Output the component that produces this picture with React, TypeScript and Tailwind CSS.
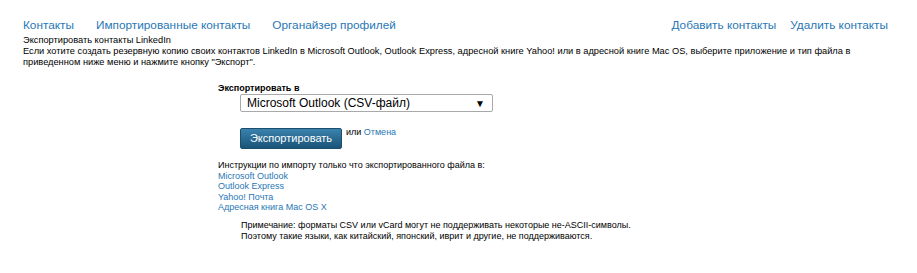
export default function App() {
  return (
    <div className="w-[917px] h-[273px] bg-white font-['Liberation_Sans',Arial,sans-serif] text-black">
      <div className="pl-[23px] pr-[29px] pt-[16px]">
        <nav className="flex justify-between text-[11.8px] leading-[18px] text-[#2977b5]">
          <div className="flex gap-[22px]">
            <a>Контакты</a>
            <a>Импортированные контакты</a>
            <a>Органайзер профилей</a>
          </div>
          <div className="flex gap-[14px]">
            <a>Добавить контакты</a>
            <a>Удалить контакты</a>
          </div>
        </nav>
        <div className="text-[9.25px] leading-[11px] mt-[1px]">
          <p>Экспортировать контакты LinkedIn</p>
          <p className="w-[835px]">
            Если хотите создать резервную копию своих контактов LinkedIn в Microsoft Outlook, Outlook Express, адресной книге Yahoo! или в адресной книге Mac OS, выберите приложение и тип файла в приведенном ниже меню и нажмите кнопку "Экспорт".
          </p>
        </div>
      </div>

      <div className="pl-[218px] mt-[14px] text-[9px]">
        <div className="font-bold text-[9px] leading-[12px]">Экспортировать в</div>
        <div className="ml-[22px] w-[253px] h-[18px] border border-[#a9a9a9] rounded-[2px] flex items-center justify-between pl-[6px] pr-[7px] text-[12px] text-black">
          <span>Microsoft Outlook (CSV-файл)</span>
          <span className="text-[10px]">▼</span>
        </div>
        <div className="ml-[22px] mt-[16px] flex items-start">
          <button className="w-[102px] h-[21px] rounded-[2px] border border-[#1c4f6e] bg-gradient-to-b from-[#3a82ad] to-[#1a5478] text-white text-[11px] leading-[19px] text-center">
            Экспортировать
          </button>
          <span className="ml-[4px] leading-[11px] mt-[-1px]">
            или <a className="text-[#2977b5]">Отмена</a>
          </span>
        </div>

        <div className="mt-[11px] leading-[10.5px]">
          <p>Инструкции по импорту только что экспортированного файла в:</p>
          <p className="text-[#2977b5]">Microsoft Outlook</p>
          <p className="text-[#2977b5]">Outlook Express</p>
          <p className="text-[#2977b5]">Yahoo! Почта</p>
          <p className="text-[#2977b5]">Адресная книга Mac OS X</p>
        </div>

        <div className="ml-[23px] mt-[7px] leading-[11px]">
          <p>Примечание: форматы CSV или vCard могут не поддерживать некоторые не-ASCII-символы.</p>
          <p>Поэтому такие языки, как китайский, японский, иврит и другие, не поддерживаются.</p>
        </div>
      </div>
    </div>
  );
}
